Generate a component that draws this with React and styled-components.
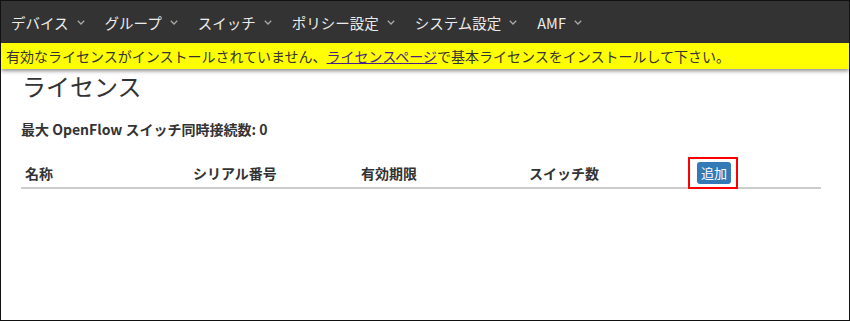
import React from 'react';
import styled, { createGlobalStyle } from 'styled-components';

const GlobalStyle = createGlobalStyle`
  html, body {
    margin: 0;
    padding: 0;
    background: #fff;
  }
  * {
    box-sizing: border-box;
  }
`;

const Frame = styled.div`
  width: 850px;
  height: 321px;
  border: 1px solid #111;
  background: #fff;
  overflow: hidden;
  font-family: "Noto Sans CJK JP", "Noto Sans", sans-serif;
  color: #333;
`;

const NavBar = styled.nav`
  display: flex;
  align-items: center;
  height: 42px;
  background: #333;
`;

const NavItem = styled.div`
  display: flex;
  align-items: center;
  gap: 8px;
  padding: 0 10px;
  font-size: 14.5px;
  color: #ececec;
  cursor: pointer;
`;

const Notice = styled.div`
  position: relative;
  height: 26px;
  line-height: 26px;
  padding-left: 5px;
  background: #ffff00;
  font-size: 14px;
  color: #333;
  box-shadow: 0 2px 4px rgba(0, 0, 0, 0.45);
  white-space: nowrap;
`;

const NoticeLink = styled.a`
  color: #4b1f8c;
  text-decoration: underline;
`;

const Main = styled.main`
  width: 800px;
  margin-left: 20px;
  padding-top: 3px;
`;

const Heading = styled.h1`
  margin: 0 0 19px 1px;
  font-size: 24px;
  line-height: 28px;
  font-weight: 400;
  color: #333;
`;

const Info = styled.div`
  font-size: 14px;
  font-weight: 700;
  line-height: 20px;
  margin-bottom: 18px;
`;

const HeadRow = styled.div`
  display: grid;
  grid-template-columns: 168px 168px 168px 168px 1fr;
  align-items: center;
  padding: 4px 0 3px;
  border-bottom: 2px solid #ccc;
`;

const HeadCell = styled.div`
  padding: 0 4px;
  font-size: 14px;
  font-weight: 700;
  line-height: 22px;
`;

const Marked = styled.span`
  position: relative;
  display: inline-block;
  &::after {
    content: '';
    position: absolute;
    top: -5px;
    bottom: -5px;
    left: -9px;
    right: -7px;
    border: 2px solid #f00;
    pointer-events: none;
  }
`;

const AddButton = styled.button`
  display: block;
  height: 22px;
  padding: 0 4px;
  border: none;
  border-radius: 3px;
  background: #337ab7;
  color: #fff;
  font-family: inherit;
  font-size: 13px;
  line-height: 22px;
  cursor: pointer;
`;

const Caret = () => (
  <svg width="8" height="5" viewBox="0 0 8 5">
    <path d="M0.8 0.8 L4 4 L7.2 0.8" fill="none" stroke="#a8a8a8" strokeWidth="1.3" />
  </svg>
);

const menu = ['デバイス', 'グループ', 'スイッチ', 'ポリシー設定', 'システム設定', 'AMF'];
const columns = ['名称', 'シリアル番号', '有効期限', 'スイッチ数'];

const App = () => (
  <Frame>
    <GlobalStyle />
    <NavBar>
      {menu.map((m) => (
        <NavItem key={m}>
          {m}
          <Caret />
        </NavItem>
      ))}
    </NavBar>
    <Notice>
      有効なライセンスがインストールされていません、
      <NoticeLink href="#">ライセンスページ</NoticeLink>
      で基本ライセンスをインストールして下さい。
    </Notice>
    <Main>
      <Heading>ライセンス</Heading>
      <Info>最大 OpenFlow スイッチ同時接続数: 0</Info>
      <HeadRow>
        {columns.map((c) => (
          <HeadCell key={c}>{c}</HeadCell>
        ))}
        <HeadCell>
          <Marked>
            <AddButton>追加</AddButton>
          </Marked>
        </HeadCell>
      </HeadRow>
    </Main>
  </Frame>
);

export default App;
